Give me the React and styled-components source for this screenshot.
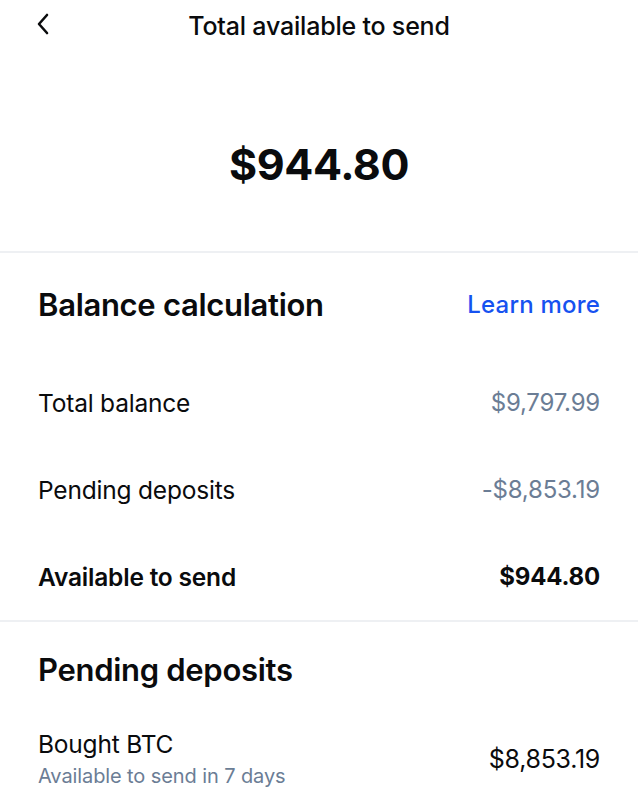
import React from 'react'
import styled, { createGlobalStyle } from 'styled-components'

const GlobalStyle = createGlobalStyle`
    body {
        margin: 0;
        background: #ffffff;
        font-family: Inter, Roboto, "Liberation Sans", sans-serif;
        color: #0a0b0d;
    }
`;

const balanceRows = [
    { label: 'Total balance', value: '$9,797.99' },
    { label: 'Pending deposits', value: '-$8,853.19' },
    { label: 'Available to send', value: '$944.80', strong: true },
];

function App() {
    return (
        <Page>
            <GlobalStyle />
            <Header>
                <BackButton aria-label="Back">
                    <svg width="14" height="22" viewBox="0 0 14 22" fill="none">
                        <path d="M11 2 L3 11 L11 20" stroke="#0a0b0d" strokeWidth="2.6" strokeLinecap="round" strokeLinejoin="round" />
                    </svg>
                </BackButton>
                <Title>Total available to send</Title>
            </Header>

            <Hero>$944.80</Hero>

            <Section>
                <SectionHead $height={102}>
                    <SectionTitle>Balance calculation</SectionTitle>
                    <Link href="#">Learn more</Link>
                </SectionHead>
                <Rows>
                    {balanceRows.map(row => (
                        <Row key={row.label}>
                            <Label $strong={row.strong}>{row.label}</Label>
                            <Value $strong={row.strong}>{row.value}</Value>
                        </Row>
                    ))}
                </Rows>
            </Section>

            <Section>
                <SectionHead $height={94}>
                    <SectionTitle>Pending deposits</SectionTitle>
                </SectionHead>
                <DepositRow>
                    <div>
                        <Label>Bought BTC</Label>
                        <Sub>Available to send in 7 days</Sub>
                    </div>
                    <DepositValue>$8,853.19</DepositValue>
                </DepositRow>
            </Section>
        </Page>
    )
}

const Page = styled.div`
    width: 638px;
    min-height: 800px;
    background: #ffffff;
`;

const Header = styled.header`
    position: relative;
    height: 52px;
    display: flex;
    align-items: center;
    justify-content: center;
`;

const BackButton = styled.button`
    position: absolute;
    left: 36px;
    top: 13px;
    border: 0;
    background: none;
    padding: 0;
    display: flex;
`;

const Title = styled.h1`
    margin: 0;
    font-size: 25px;
    font-weight: 500;
    letter-spacing: -0.2px;
`;

const Hero = styled.div`
    height: 201px;
    display: flex;
    align-items: center;
    justify-content: center;
    font-size: 43px;
    font-weight: 700;
    letter-spacing: -0.4px;
    border-bottom: 2px solid #eef0f3;
    box-sizing: border-box;
    padding-top: 24px;
`;

const Section = styled.section`
    padding: 0 38px;
    border-bottom: 2px solid #eef0f3;
    &:last-child {
        border-bottom: 0;
    }
`;

const SectionHead = styled.div`
    height: ${p => p.$height}px;
    display: flex;
    align-items: center;
    justify-content: space-between;
`;

const SectionTitle = styled.h2`
    margin: 0;
    font-size: 31px;
    font-weight: 600;
    letter-spacing: -0.3px;
`;

const Link = styled.a`
    color: #1652f0;
    font-size: 24px;
    font-weight: 500;
    letter-spacing: 0.2px;
    text-decoration: none;
`;

const Rows = styled.div`
    padding-top: 4px;
`;

const Row = styled.div`
    height: 87px;
    display: flex;
    align-items: center;
    justify-content: space-between;
`;

const Label = styled.div`
    font-size: 24.5px;
    font-weight: ${p => (p.$strong ? 600 : 400)};
    letter-spacing: -0.2px;
    color: #0a0b0d;
`;

const Value = styled.div`
    font-size: 24px;
    font-weight: ${p => (p.$strong ? 700 : 400)};
    letter-spacing: -0.2px;
    color: ${p => (p.$strong ? '#0a0b0d' : '#6b7d95')};
`;

const DepositRow = styled.div`
    display: flex;
    align-items: center;
    justify-content: space-between;
    padding-top: 13px;
`;

const Sub = styled.div`
    font-size: 20px;
    letter-spacing: -0.1px;
    color: #6b7d95;
    margin-top: 5px;
`;

const DepositValue = styled.div`
    font-size: 25px;
    letter-spacing: -0.3px;
    color: #0a0b0d;
`;

export default App
